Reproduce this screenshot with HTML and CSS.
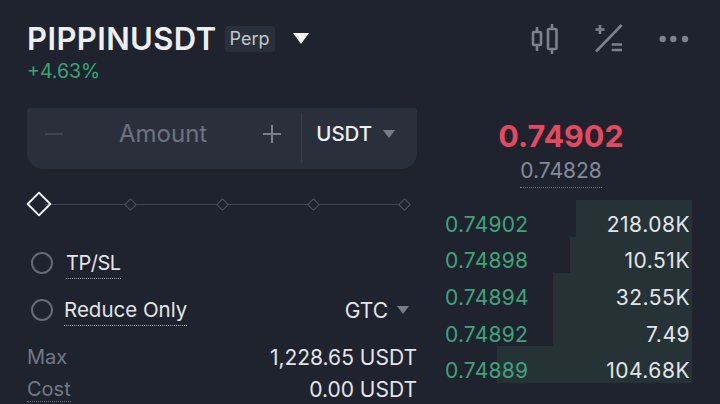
FILE: index.html
```html
<!DOCTYPE html>
<html>
  <head>
    <title>PIPPINUSDT Perp</title>
    <meta name="viewport" content="width=device-width, initial-scale=1.0">
    <link rel="stylesheet" href="styles.css">
  </head>

  <body>
    <div class="page">
      <div class="header">
        <div class="title-row">
          <h1>PIPPINUSDT</h1>
          <span class="tag">Perp</span>
          <span class="caret caret-white"></span>
        </div>
        <div class="tools">
          <svg width="28" height="30" viewBox="0 0 28 30" fill="none" stroke="#7b818d" stroke-width="2.600">
            <path d="M6 3v5M6 21v6M21 0v5M21 25v5"/>
            <rect x="2" y="8" width="8" height="13" rx="1"/>
            <rect x="17" y="5" width="8.500" height="20" rx="1"/>
          </svg>
          <svg width="28" height="30" viewBox="0 0 28 30" fill="none" stroke="#7b818d" stroke-width="2.600">
            <path d="M0.500 5.500h9M5 1v9M1 27.500 26.700 1M16.700 20.500H27M16.700 26H27"/>
          </svg>
          <svg width="30" height="8" viewBox="0 0 30 8" fill="#7b818d">
            <circle cx="3.700" cy="4" r="3.200"/>
            <circle cx="14.300" cy="4" r="3.200"/>
            <circle cx="26" cy="4" r="3.200"/>
          </svg>
        </div>
      </div>
      <div class="change">+4.63%</div>

      <div class="main">
        <div class="form">
          <div class="amount-box">
            <span class="step step-off"></span>
            <span class="amount-label">Amount</span>
            <span class="step step-plus"></span>
            <div class="unit">
              <span>USDT</span>
              <span class="caret caret-grey"></span>
            </div>
          </div>

          <div class="slider">
            <span class="knob knob-on"></span>
            <span class="track"></span>
            <span class="knob"></span>
            <span class="track"></span>
            <span class="knob"></span>
            <span class="track"></span>
            <span class="knob"></span>
            <span class="track"></span>
            <span class="knob"></span>
          </div>

          <div class="option option-first">
            <span class="radio"></span>
            <span class="dotted tpsl">TP/SL</span>
          </div>
          <div class="option option-second">
            <span class="radio"></span>
            <span class="dotted">Reduce Only</span>
            <div class="gtc">
              <span>GTC</span>
              <span class="caret caret-grey"></span>
            </div>
          </div>

          <div class="stat stat-max">
            <span class="stat-label">Max</span>
            <span>1,228.65 USDT</span>
          </div>
          <div class="stat stat-cost">
            <span class="stat-label dotted-grey">Cost</span>
            <span>0.00 USDT</span>
          </div>
        </div>

        <div class="book">
          <div class="last-price">0.74902</div>
          <div class="mark-wrap"><span class="mark-price">0.74828</span></div>
          <ul class="rows">
            <li class="row"><span class="bar" style="width: 116px"></span><span class="bid">0.74902</span><span class="size">218.08K</span></li>
            <li class="row"><span class="bar" style="width: 122px"></span><span class="bid">0.74898</span><span class="size">10.51K</span></li>
            <li class="row"><span class="bar" style="width: 139px"></span><span class="bid">0.74894</span><span class="size">32.55K</span></li>
            <li class="row"><span class="bar" style="width: 139px"></span><span class="bid">0.74892</span><span class="size">7.49</span></li>
            <li class="row"><span class="bar" style="width: 195px"></span><span class="bid">0.74889</span><span class="size">104.68K</span></li>
          </ul>
        </div>
      </div>
    </div>
  </body>
</html>
```

FILE: styles.css
```css
*{
  margin: 0px;
  padding: 0px;
  box-sizing: border-box;
}

html, body{
  width: 720px;
  height: 404px;
  overflow: hidden;
  background-color: #1e232e;
}

body{
  font-family: "Inter", "Liberation Sans", sans-serif;
  color: #e8eaee;
}

.page{
  padding: 20px 28px 0px 27px;
}

.header{
  display: flex;
  justify-content: space-between;
  align-items: center;
  height: 37px;
}

.title-row{
  display: flex;
  align-items: center;
}

.title-row h1{
  font-size: 31px;
  font-weight: 600;
  letter-spacing: 0.400px;
  color: #edeff3;
}

.tag{
  margin-left: 8px;
  padding: 0px 5px;
  height: 26px;
  line-height: 26px;
  border-radius: 3px;
  background-color: #2a303b;
  font-size: 18px;
  color: #c3c7ce;
}

.caret{
  display: inline-block;
  width: 0px;
  height: 0px;
  border-left: 6px solid transparent;
  border-right: 6px solid transparent;
}

.caret-white{
  margin-left: 18px;
  border-left-width: 8px;
  border-right-width: 8px;
  border-top: 11px solid #f2f3f5;
}

.caret-grey{
  border-top: 8px solid #767c88;
}

.tools{
  display: flex;
  align-items: center;
  gap: 36px;
  padding-right: 3px;
}

.change{
  margin-top: 2px;
  height: 24px;
  line-height: 24px;
  font-size: 19.500px;
  color: #36a678;
}

.main{
  display: flex;
  gap: 28px;
  margin-top: 25px;
}

.form{
  width: 390px;
  flex: none;
}

.amount-box{
  display: flex;
  align-items: center;
  height: 61px;
  padding-left: 18px;
  padding-bottom: 10px;
  border-radius: 3px 3px 16px 16px;
  background-color: #2a303b;
}

.step{
  position: relative;
  display: block;
  width: 18px;
  height: 2px;
  background-color: #3f4550;
}

.step-plus{
  margin-left: 56px;
  background-color: #7b818d;
}

.step-plus::after{
  content: "";
  position: absolute;
  left: 8px;
  top: -8px;
  width: 2px;
  height: 18px;
  background-color: #7b818d;
}

.amount-label{
  margin-left: 56px;
  font-size: 24px;
  color: #6d7381;
}

.unit{
  display: flex;
  align-items: center;
  gap: 11px;
  height: 50px;
  margin-left: 20px;
  margin-top: 8px;
  padding-left: 14px;
  padding-bottom: 8px;
  border-left: 1px solid #3a404b;
  font-size: 20.500px;
  font-weight: 500;
  color: #eceef1;
}

.slider{
  display: flex;
  align-items: center;
  height: 24px;
  margin-top: 23px;
  padding-right: 7px;
}

.knob{
  flex: none;
  width: 9px;
  height: 9px;
  margin: 0px 1px;
  transform: rotate(45deg);
  border: 1px solid #4d535e;
  border-radius: 1px;
}

.knob-on{
  width: 18px;
  height: 18px;
  margin: 0px -3px 0px 3px;
  border: 2px solid #f2f3f5;
}

.track{
  flex: 1;
  height: 1px;
  background-color: #3f4550;
}

.option{
  display: flex;
  align-items: center;
  height: 30px;
  font-size: 20.500px;
  color: #e3e5e9;
}

.option-first{
  margin-top: 32px;
}

.option-second{
  margin-top: 17px;
}

.radio{
  width: 22px;
  height: 22px;
  margin-left: 4px;
  margin-right: 11px;
  border: 2px solid #656b76;
  border-radius: 50%;
}

.tpsl{
  margin-left: 2px;
  font-size: 20px;
  letter-spacing: -0.500px;
}

.dotted{
  border-bottom: 1px dotted #9a9fa8;
  line-height: 30px;
}

.gtc{
  display: flex;
  align-items: center;
  gap: 9px;
  margin-left: auto;
  padding-right: 8px;
  font-size: 21px;
}

.stat{
  display: flex;
  justify-content: space-between;
  align-items: center;
  height: 26px;
  font-size: 21px;
  color: #e3e5e9;
}

.stat-max{
  margin-top: 19px;
}

.stat-cost{
  margin-top: 6px;
}

.stat-label{
  font-size: 20px;
  color: #737985;
}

.dotted-grey{
  border-bottom: 1px dotted #737985;
}

.book{
  width: 247px;
  flex: none;
}

.last-price{
  height: 36px;
  margin-top: 10px;
  margin-right: 15px;
  text-align: center;
  line-height: 36px;
  font-size: 30.500px;
  font-weight: 700;
  color: #e5485f;
}

.mark-wrap{
  margin-top: 3px;
  margin-right: 15px;
  text-align: center;
}

.mark-price{
  display: inline-block;
  height: 31px;
  line-height: 28px;
  font-size: 21px;
  color: #858b96;
  border-bottom: 1px dotted #737985;
}

.rows{
  list-style-type: none;
  margin-top: 12px;
}

.row{
  position: relative;
  display: flex;
  justify-content: space-between;
  align-items: center;
  height: 36.600px;
  padding-top: 12px;
  padding-right: 2px;
  font-size: 21px;
  letter-spacing: 0.200px;
}

.bar{
  position: absolute;
  right: 0px;
  top: 0px;
  bottom: 0px;
  background-color: #253336;
}

.bid{
  position: relative;
  color: #3ea37c;
}

.size{
  position: relative;
  letter-spacing: 0.500px;
  color: #e3e5e9;
}
```
